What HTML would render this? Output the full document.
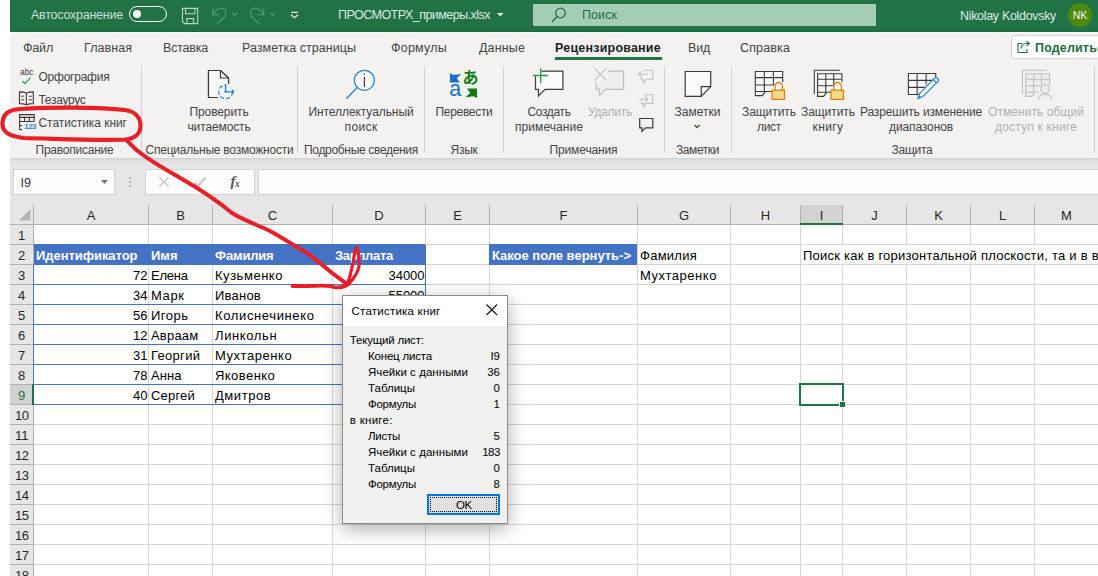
<!DOCTYPE html>
<html lang="ru"><head><meta charset="utf-8"><title>Excel</title>
<style>
html,body{margin:0;padding:0;}
body{width:1098px;height:576px;overflow:hidden;background:#fff;position:relative;font-family:"Liberation Sans", sans-serif;}
.t{position:absolute;white-space:pre;}
.b{position:absolute;box-sizing:border-box;}
svg{position:absolute;overflow:visible;}
</style></head><body>
<div class="b" style="left:10px;top:0px;width:1088px;height:32px;background:#217346;"></div>
<div class="b" style="left:10px;top:32px;width:1088px;height:126px;background:#f3f2f1;"></div>
<div class="b" style="left:10px;top:31px;width:1088px;height:1px;background:#1e6a3f;"></div>
<div class="b" style="left:10px;top:32px;width:1088px;height:1px;background:#fbfaf9;"></div>
<div class="b" style="left:10px;top:158px;width:1088px;height:66px;background:#e6e6e6;"></div>
<div class="b" style="left:10px;top:158px;width:1088px;height:4px;background:linear-gradient(#d2d2d2,#e6e6e6);"></div>
<div class="t" style="left:31.0px;top:7.5px;font-size:12.5px;line-height:15px;color:#c9dfd3;letter-spacing:-0.24px;">Автосохранение</div>
<div class="b" style="left:129px;top:6px;width:38px;height:16px;border:1.5px solid #fff;border-radius:9px;"></div>
<div class="b" style="left:133px;top:10px;width:8px;height:8px;border-radius:50%;background:#fff;"></div>
<svg style="left:0;top:0" width="1098" height="40" viewBox="0 0 1098 40" fill="none"><g stroke="#b9d6c6" stroke-width="1.100"><path d="M182.500 8.400h15.200v15.200h-13l-2.200-2.200z"/><path d="M185.500 8.400v5.400h9.400V8.400"/><path d="M186.800 23.600v-5h6.800v5"/></g>
<g stroke="#5a9d7c" stroke-width="1.100"><path d="M212.700 8.300v6.400h6.300"/><path d="M212.900 14.500c2.500-4 5.500-6.200 8.300-6.200 2.800 0 4.600 2.200 4.600 5 0 1.800-0.800 3.200-2 4.400l-6.600 5.900"/><path d="M232.200 12.700l2.500 2.700 2.500-2.700"/>
<path d="M263.700 8.300v6.400h-6.300"/><path d="M263.500 14.500c-2.500-4-5.500-6.200-8.300-6.200-2.800 0-4.600 2.200-4.600 5 0 1.800 0.800 3.200 2 4.400l6.600 5.900"/><path d="M270.100 12.700l2.500 2.700 2.500-2.700"/></g>
<g stroke="#e3efe8" stroke-width="1.200"><path d="M291 12.400h7"/><path d="M291 14.800l3.500 3 3.500-3"/></g></svg>
<div class="t" style="left:338.0px;top:7.5px;font-size:12.5px;line-height:15px;color:#d9e9e0;letter-spacing:-0.53px;">ПРОСМОТРХ_примеры.xlsx</div>
<svg style="left:496.500px;top:12.500px" width="7" height="4" viewBox="0 0 7 4"><path d="M0 0h6.500l-3.250 3.600z" fill="#e3efe8"/></svg>
<div class="b" style="left:533px;top:4px;width:343px;height:22px;background:#a3ceb5;"></div>
<svg style="left:551px;top:7px" width="16" height="16" viewBox="0 0 16 16" fill="none" stroke="#1e6e42" stroke-width="1.3"><circle cx="9.500" cy="6" r="4.800"/><path d="M6 9.500l-5 5.500"/></svg>
<div class="t" style="left:582.0px;top:7.5px;font-size:12.5px;line-height:15px;color:#1e6e42;letter-spacing:0.07px;">Поиск</div>
<div class="t" style="left:960.0px;top:8.5px;font-size:12.5px;line-height:15px;color:#dcebe2;letter-spacing:-0.32px;">Nikolay Koldovsky</div>
<div class="b" style="left:1068px;top:3px;width:24px;height:24px;border-radius:50%;background:#4f8a10;"></div>
<div class="t" style="left:1072.7px;top:9.0px;font-size:10.5px;line-height:13px;color:#f0f6e8;">NK</div>
<div class="t" style="left:23.0px;top:40.5px;font-size:12.5px;line-height:15px;color:#444444;letter-spacing:-0.18px;">Файл</div>
<div class="t" style="left:84.0px;top:40.5px;font-size:12.5px;line-height:15px;color:#444444;letter-spacing:0.06px;">Главная</div>
<div class="t" style="left:163.0px;top:40.5px;font-size:12.5px;line-height:15px;color:#444444;letter-spacing:-0.21px;">Вставка</div>
<div class="t" style="left:242.0px;top:40.5px;font-size:12.5px;line-height:15px;color:#444444;letter-spacing:0.03px;">Разметка страницы</div>
<div class="t" style="left:391.0px;top:40.5px;font-size:12.5px;line-height:15px;color:#444444;letter-spacing:0.23px;">Формулы</div>
<div class="t" style="left:479.0px;top:40.5px;font-size:12.5px;line-height:15px;color:#444444;letter-spacing:0.14px;">Данные</div>
<div class="t" style="left:688.0px;top:40.5px;font-size:12.5px;line-height:15px;color:#444444;letter-spacing:-0.21px;">Вид</div>
<div class="t" style="left:740.0px;top:40.5px;font-size:12.5px;line-height:15px;color:#444444;letter-spacing:0.14px;">Справка</div>
<div class="t" style="left:555.0px;top:40.5px;font-size:12.5px;line-height:15px;color:#222;font-weight:700;letter-spacing:0.21px;">Рецензирование</div>
<div class="b" style="left:555px;top:57px;width:107px;height:3px;background:#217346;"></div>
<div class="b" style="left:1011px;top:35px;width:100px;height:24px;background:#fff;border:1px solid #d8d6d4;border-radius:3px;"></div>
<svg style="left:1017px;top:40px" width="13" height="13" viewBox="0 0 13 13" fill="none" stroke="#217346" stroke-width="1.1"><path d="M5 3.500H1v9h9V9"/><path d="M4 8.500c0-3 2-5 5-5h3"/><path d="M9.500 1l2.800 2.500-2.800 2.500"/></svg>
<div class="t" style="left:1035.0px;top:40.5px;font-size:12.5px;line-height:15px;color:#1e6e42;font-weight:700;letter-spacing:0.15px;">Поделиться</div>
<div class="b" style="left:141px;top:66px;width:1px;height:87px;background:#d2d0ce;"></div>
<div class="b" style="left:297px;top:66px;width:1px;height:87px;background:#d2d0ce;"></div>
<div class="b" style="left:424px;top:66px;width:1px;height:87px;background:#d2d0ce;"></div>
<div class="b" style="left:503px;top:66px;width:1px;height:87px;background:#d2d0ce;"></div>
<div class="b" style="left:664px;top:66px;width:1px;height:87px;background:#d2d0ce;"></div>
<div class="b" style="left:731px;top:66px;width:1px;height:87px;background:#d2d0ce;"></div>
<div class="b" style="left:1094px;top:66px;width:1px;height:87px;background:#d2d0ce;"></div>
<div class="t" style="left:35.5px;top:143.0px;font-size:12px;line-height:14px;color:#444444;letter-spacing:-0.23px;">Правописание</div>
<div class="t" style="left:145.5px;top:143.0px;font-size:12px;line-height:14px;color:#444444;letter-spacing:-0.23px;">Специальные возможности</div>
<div class="t" style="left:304.0px;top:143.0px;font-size:12px;line-height:14px;color:#444444;letter-spacing:-0.32px;">Подробные сведения</div>
<div class="t" style="left:450.5px;top:143.0px;font-size:12px;line-height:14px;color:#444444;letter-spacing:-0.26px;">Язык</div>
<div class="t" style="left:549.5px;top:143.0px;font-size:12px;line-height:14px;color:#444444;letter-spacing:-0.13px;">Примечания</div>
<div class="t" style="left:676.0px;top:143.0px;font-size:12px;line-height:14px;color:#444444;letter-spacing:-0.42px;">Заметки</div>
<div class="t" style="left:891.5px;top:143.0px;font-size:12px;line-height:14px;color:#444444;letter-spacing:-0.26px;">Защита</div>
<div class="t" style="left:38.5px;top:70.0px;font-size:12px;line-height:14px;color:#444444;letter-spacing:-0.24px;">Орфография</div>
<div class="t" style="left:38.5px;top:93.0px;font-size:12px;line-height:14px;color:#444444;letter-spacing:-0.3px;">Тезаурус</div>
<div class="t" style="left:38.5px;top:116.0px;font-size:12px;line-height:14px;color:#444444;letter-spacing:-0.06px;">Статистика книг</div>
<div class="t" style="left:189.5px;top:104.5px;font-size:12px;line-height:14px;color:#444444;letter-spacing:-0.11px;">Проверить</div>
<div class="t" style="left:187.5px;top:120.0px;font-size:12px;line-height:14px;color:#444444;letter-spacing:-0.13px;">читаемость</div>
<div class="t" style="left:308.5px;top:104.5px;font-size:12px;line-height:14px;color:#444444;letter-spacing:-0.08px;">Интеллектуальный</div>
<div class="t" style="left:344.5px;top:120.0px;font-size:12px;line-height:14px;color:#444444;letter-spacing:0.38px;">поиск</div>
<div class="t" style="left:435.5px;top:104.5px;font-size:12px;line-height:14px;color:#444444;letter-spacing:-0.31px;">Перевести</div>
<div class="t" style="left:527.5px;top:104.5px;font-size:12px;line-height:14px;color:#444444;letter-spacing:-0.37px;">Создать</div>
<div class="t" style="left:515.0px;top:120.0px;font-size:12px;line-height:14px;color:#444444;letter-spacing:0.07px;">примечание</div>
<div class="t" style="left:588.0px;top:104.5px;font-size:12px;line-height:14px;color:#b3b0ad;letter-spacing:-0.26px;">Удалить</div>
<div class="t" style="left:674.5px;top:104.5px;font-size:12px;line-height:14px;color:#444444;letter-spacing:0.01px;">Заметки</div>
<div class="t" style="left:742.0px;top:104.5px;font-size:12px;line-height:14px;color:#444444;letter-spacing:-0.06px;">Защитить</div>
<div class="t" style="left:757.0px;top:120.0px;font-size:12px;line-height:14px;color:#444444;letter-spacing:-0.3px;">лист</div>
<div class="t" style="left:801.0px;top:104.5px;font-size:12px;line-height:14px;color:#444444;letter-spacing:-0.06px;">Защитить</div>
<div class="t" style="left:812.5px;top:120.0px;font-size:12px;line-height:14px;color:#444444;letter-spacing:0.41px;">книгу</div>
<div class="t" style="left:860.0px;top:104.5px;font-size:12px;line-height:14px;color:#444444;letter-spacing:-0.15px;">Разрешить изменение</div>
<div class="t" style="left:889.0px;top:120.0px;font-size:12px;line-height:14px;color:#444444;letter-spacing:-0.11px;">диапазонов</div>
<div class="t" style="left:988.0px;top:104.5px;font-size:12px;line-height:14px;color:#b3b0ad;letter-spacing:0.07px;">Отменить общий</div>
<div class="t" style="left:995.0px;top:120.0px;font-size:12px;line-height:14px;color:#b3b0ad;letter-spacing:0.21px;">доступ к книге</div>
<div class="t" style="left:20.0px;top:66.5px;font-size:8.5px;line-height:10px;color:#3b3a39;letter-spacing:-0.07px;">abc</div>
<svg style="left:0;top:0" width="1098" height="576" viewBox="0 0 1098 576" fill="none" ><path d="M22.300 81.300l2.700 2.300 5.500-6" stroke="#2e9e4f" stroke-width="1.300"/></svg>
<svg style="left:0;top:0" width="1098" height="576" viewBox="0 0 1098 576" fill="none" ><g stroke="#3b3a39" stroke-width="1.100"><path d="M26.400 93.200c-1.500-1-4-1.300-6.900-1.300v11.700c2.900 0 5.400 0.300 6.900 1.300 1.500-1 4-1.300 6.900-1.300V91.900c-2.900 0-5.400 0.300-6.900 1.300z"/><path d="M26.400 93.200v11.700"/>
<path d="M28.800 96.200h3M28.800 99.800h3M21.200 99.800h3"/><path d="M21.200 96.200h3" stroke="#e8202a"/></g></svg>
<svg style="left:0;top:0" width="1098" height="576" viewBox="0 0 1098 576" fill="none" ><rect x="19.600" y="114.900" width="14.600" height="2.400" fill="#c8c6c4"/><g stroke="#3b3a39" stroke-width="1.100"><path d="M19.600 129.600V114.500h14.600v7"/><path d="M19.600 117.500h14.600M19.600 121.500h14.600M24.500 117.500v4M29.300 117.500v4"/><path d="M19.600 125.500h2.500M19.600 129.600h2.500"/></g></svg>
<div class="t" style="left:24.3px;top:122.3px;font-size:8px;line-height:10px;color:#2b88d8;font-weight:700;letter-spacing:-0.62px;">123</div>
<svg style="left:0;top:0" width="1098" height="576" viewBox="0 0 1098 576" fill="none" ><path d="M208.500 70.500h12l8 7.500v6.500M208.500 70.500v27h9.500" stroke="#3b3a39" stroke-width="1.200" fill="#fafafa"/><path d="M208.500 70.500h12l8 7.500v19.500h-20z" fill="#fafafa"/><path d="M208.500 97.500v-27h12l8 7.500v6.500M220.500 70.500v7.500h8M208.500 97.500h9.500" stroke="#3b3a39" stroke-width="1.200"/>
<circle cx="225.600" cy="91.800" r="7" stroke="#2b88d8" stroke-width="1.200" stroke-dasharray="4.200 2.100" fill="#f3f2f1"/><rect x="226" y="84" width="9" height="7" fill="#f3f2f1"/><path d="M225.600 84.200v7.600h7.500" stroke="#2b88d8" stroke-width="1.300"/><path d="M231.800 89l3 2.800-3 2.800z" fill="#2b88d8"/><path d="M223.800 90.800h3.600l-1.800 2.400z" fill="#2b88d8"/></svg>
<svg style="left:0;top:0" width="1098" height="576" viewBox="0 0 1098 576" fill="none" ><circle cx="364.400" cy="80.300" r="10" stroke="#2b88d8" stroke-width="1.300" fill="#fafafa"/><path d="M357.300 87.600L346.300 98.700" stroke="#2b88d8" stroke-width="1.400"/><path d="M364.400 76.800v10" stroke="#3b3a39" stroke-width="1.200"/><circle cx="364.400" cy="74.300" r="0.800" fill="#3b3a39"/></svg>
<svg style="left:0;top:0" width="1098" height="576" viewBox="0 0 1098 576" fill="none" ><path d="M449.900 73.100l3.500 1.800 8-1-4.600 4.300 3 4.400h-9.900z" fill="#1a6fc9"/><path d="M477 98l-3.500-1.800-8 1 4.600-4.300-3-4.400h9.900z" fill="#107c10"/></svg>
<div class="t" style="left:449.3px;top:76.0px;font-size:21.5px;line-height:26px;color:#1a6fc9;">a</div>
<div class="t" style="left:462.5px;top:68.0px;font-size:16px;line-height:19px;color:#107c10;font-weight:700;font-family:'Liberation Sans','Noto Sans CJK JP',sans-serif;">あ</div>
<svg style="left:0;top:0" width="1098" height="576" viewBox="0 0 1098 576" fill="none" ><path d="M535.500 71.200h27.400v18.200h-18l-6.400 6.600v-6.600h-3z" stroke="#3b3a39" stroke-width="1.200" fill="#fafafa"/><rect x="532" y="67" width="9.400" height="9.200" fill="#f3f2f1"/><path d="M533 75.500h15M540.700 68.200v15" stroke="#2e9e4f" stroke-width="1.400"/></svg>
<svg style="left:0;top:0" width="1098" height="576" viewBox="0 0 1098 576" fill="none" ><path d="M596.300 71.200h27.300v18.200h-18l-6.300 6.600v-6.600h-3z" stroke="#c2c0be" stroke-width="1.200" fill="#ededed"/><rect x="593" y="67" width="15" height="15" fill="#f3f2f1"/><path d="M594.400 68.200l12.200 12.400M606.600 68.200l-12.200 12.400" stroke="#c2c0be" stroke-width="1.200"/></svg>
<svg style="left:0;top:0" width="1098" height="576" viewBox="0 0 1098 576" fill="none" ><path d="M644 70.300h8.800v9h-6.600l-3 3.600v-3.600h-1.800v-2.500" stroke="#c2c0be" stroke-width="1.100"/><path d="M638.700 74.200h9M641.500 71.400l-2.800 2.800 2.800 2.800" stroke="#c2c0be" stroke-width="1.100"/>
<path d="M644 94.800h8.800v8.600h-6.600l-3 3.600v-3.600h-1.800v-2" stroke="#c2c0be" stroke-width="1.100"/><path d="M638.700 99.200h9M645 96.400l2.800 2.800-2.800 2.800" stroke="#c2c0be" stroke-width="1.100"/>
<path d="M639.700 118.500h13.100v9.300h-7.300l-3.600 3.600v-3.600h-2.200z" stroke="#3b3a39" stroke-width="1.200"/></svg>
<svg style="left:0;top:0" width="1098" height="576" viewBox="0 0 1098 576" fill="none" ><path d="M685.200 71.500h25.500v15.100l-9.500 9.800h-16z" stroke="#3b3a39" stroke-width="1.200" fill="#fafafa"/><path d="M710.700 86.600h-9.500v9.800" stroke="#3b3a39" stroke-width="1.200"/><path d="M694.600 125l2.500 2.500 2.500-2.500" stroke="#3b3a39" stroke-width="1.100"/></svg>
<svg style="left:0;top:0" width="1098" height="576" viewBox="0 0 1098 576" fill="none" ><path d="M755.300 71.500h27.400v24.100h-27.400z" fill="#fafafa"/><g stroke="#3b3a39" stroke-width="1.100"><path d="M782.700 82V71.500h-27.400v24.100h7l3-4"/><path d="M755.300 77.600h27.400M755.300 85h19M755.300 91.500h17M764.300 71.500v20M773.400 71.500v13"/></g><path d="M775 90.2v-4a3.700 3.700 0 0 1 7.400 0v4" stroke="#e07b00" stroke-width="1.300"/><rect x="772" y="90.2" width="12.500" height="9.200" fill="#f8d98a" stroke="#e07b00" stroke-width="1.200"/></svg>
<svg style="left:0;top:0" width="1098" height="576" viewBox="0 0 1098 576" fill="none" ><path d="M817.600 73.800h24.300v22.600h-24.300z" fill="#fafafa"/><g stroke="#3b3a39" stroke-width="1.100"><path d="M839.800 70.200h-25.500v23.800"/><path d="M841.900 82V73.800h-24.300v22.600h6l3-4"/><path d="M817.600 79.200h24.300M817.600 85.800h16M817.600 92.300h14M825.800 73.800v18.500M833.700 73.800v11"/></g><path d="M834 90.2v-4a3.700 3.700 0 0 1 7.400 0v4" stroke="#e07b00" stroke-width="1.300"/><rect x="831" y="90.2" width="12.500" height="9.200" fill="#f8d98a" stroke="#e07b00" stroke-width="1.200"/></svg>
<svg style="left:0;top:0" width="1098" height="576" viewBox="0 0 1098 576" fill="none" ><path d="M908.400 73.500h27.300v6l-15 15h-12.300z" fill="#fafafa"/><g stroke="#3b3a39" stroke-width="1.100"><path d="M921 94.500h-12.600v-21h27.300v5"/><path d="M908.400 80.400h25M908.400 87.400h17M917.100 73.500v21M926.100 73.500v11"/></g>
<path d="M933.200 79.500l3.400 3.400-13.800 13.600-5 2.300 1.700-5.200z" fill="#fafafa" stroke="#2b88d8" stroke-width="1.200" stroke-linejoin="round"/><path d="M934.300 78.500a2.400 2.400 0 0 1 3.400 3.400l-1.100 1.100-3.400-3.400z" fill="#fafafa" stroke="#2b88d8" stroke-width="1.200"/><path d="M917.800 98.800l1.200-3.800 2.600 2.600z" fill="#2b88d8"/></svg>
<svg style="left:0;top:0" width="1098" height="576" viewBox="0 0 1098 576" fill="none" ><path d="M1025.700 73.800h23.900v22.600h-23.900z" fill="#ededed"/><g stroke="#c2c0be" stroke-width="1.100"><path d="M1047.500 70.200h-25v23.800"/><path d="M1049.600 85V73.800h-23.900v22.600h6l3-4"/><path d="M1025.700 79.200h23.900M1025.700 85.800h15M1025.700 92.300h12M1033.700 73.800v18.500M1041.600 73.800v11"/>
<circle cx="1045" cy="89" r="4.300" fill="#ededed"/><path d="M1038.400 99.700c0-3.500 3-5.600 6.600-5.600s6.800 2.100 6.800 5.600" fill="#ededed"/></g></svg>
<div class="b" style="left:13px;top:169px;width:102px;height:26px;background:#fdfdfd;border:1px solid #d4d4d4;"></div>
<div class="t" style="left:20.5px;top:175.7px;font-size:12.5px;line-height:15px;color:#333;">I9</div>
<svg style="left:101px;top:180px" width="8" height="5" viewBox="0 0 8 5"><path d="M0 0h7l-3.500 4z" fill="#777"/></svg>
<div class="b" style="left:129px;top:177px;width:2px;height:2px;background:#b8b8b8;"></div>
<div class="b" style="left:129px;top:181px;width:2px;height:2px;background:#b8b8b8;"></div>
<div class="b" style="left:129px;top:185px;width:2px;height:2px;background:#b8b8b8;"></div>
<div class="b" style="left:145px;top:169px;width:110px;height:26px;background:#fdfdfd;border:1px solid #d4d4d4;"></div>
<svg style="left:158px;top:176px" width="12" height="12" viewBox="0 0 12 12" fill="none" stroke="#c4c4c4" stroke-width="1.3"><path d="M1.500 1.500l9 9M10.500 1.500l-9 9"/></svg>
<svg style="left:193px;top:176px" width="14" height="12" viewBox="0 0 14 12" fill="none" stroke="#c6c6c6" stroke-width="2.200"><path d="M1.500 6.500l3.500 3.500 7.500-8.500"/></svg>
<div class="t" style="left:230.5px;top:172.0px;font-size:15px;line-height:18px;color:#555;font-weight:700;font-style:italic;font-family:'Liberation Serif',serif;">f</div>
<div class="t" style="left:235.0px;top:178.5px;font-size:9.5px;line-height:11px;color:#555;font-weight:700;font-style:italic;font-family:'Liberation Serif',serif;">x</div>
<div class="b" style="left:258px;top:169px;width:850px;height:26px;background:#fdfdfd;border:1px solid #d4d4d4;"></div>
<div class="b" style="left:10px;top:224px;width:1088px;height:352px;background:#fff;"></div>
<div class="b" style="left:801px;top:205px;width:41px;height:19px;background:#d2d2d2;"></div>
<div class="b" style="left:10px;top:225px;width:23px;height:351px;background:#e6e6e6;"></div>
<div class="b" style="left:10px;top:385px;width:23px;height:19px;background:#d2d2d2;"></div>
<div class="b" style="left:10px;top:224px;width:1088px;height:1px;background:#b1b1b1;"></div>
<div class="b" style="left:148px;top:205px;width:1px;height:19px;background:#b1b1b1;"></div>
<div class="t" style="left:86.7px;top:207.5px;font-size:13px;line-height:16px;color:#262626;">A</div>
<div class="b" style="left:212px;top:205px;width:1px;height:19px;background:#b1b1b1;"></div>
<div class="t" style="left:176.2px;top:207.5px;font-size:13px;line-height:16px;color:#262626;">B</div>
<div class="b" style="left:332px;top:205px;width:1px;height:19px;background:#b1b1b1;"></div>
<div class="t" style="left:267.8px;top:207.5px;font-size:13px;line-height:16px;color:#262626;">C</div>
<div class="b" style="left:425px;top:205px;width:1px;height:19px;background:#b1b1b1;"></div>
<div class="t" style="left:374.3px;top:207.5px;font-size:13px;line-height:16px;color:#262626;">D</div>
<div class="b" style="left:489px;top:205px;width:1px;height:19px;background:#b1b1b1;"></div>
<div class="t" style="left:453.2px;top:207.5px;font-size:13px;line-height:16px;color:#262626;">E</div>
<div class="b" style="left:637px;top:205px;width:1px;height:19px;background:#b1b1b1;"></div>
<div class="t" style="left:559.5px;top:207.5px;font-size:13px;line-height:16px;color:#262626;">F</div>
<div class="b" style="left:730px;top:205px;width:1px;height:19px;background:#b1b1b1;"></div>
<div class="t" style="left:678.9px;top:207.5px;font-size:13px;line-height:16px;color:#262626;">G</div>
<div class="b" style="left:800px;top:205px;width:1px;height:19px;background:#b1b1b1;"></div>
<div class="t" style="left:760.8px;top:207.5px;font-size:13px;line-height:16px;color:#262626;">H</div>
<div class="b" style="left:842px;top:205px;width:1px;height:19px;background:#b1b1b1;"></div>
<div class="t" style="left:819.7px;top:207.5px;font-size:13px;line-height:16px;color:#262626;">I</div>
<div class="b" style="left:906px;top:205px;width:1px;height:19px;background:#b1b1b1;"></div>
<div class="t" style="left:871.2px;top:207.5px;font-size:13px;line-height:16px;color:#262626;">J</div>
<div class="b" style="left:970px;top:205px;width:1px;height:19px;background:#b1b1b1;"></div>
<div class="t" style="left:934.2px;top:207.5px;font-size:13px;line-height:16px;color:#262626;">K</div>
<div class="b" style="left:1034px;top:205px;width:1px;height:19px;background:#b1b1b1;"></div>
<div class="t" style="left:998.9px;top:207.5px;font-size:13px;line-height:16px;color:#262626;">L</div>
<div class="b" style="left:1098px;top:205px;width:1px;height:19px;background:#b1b1b1;"></div>
<div class="t" style="left:1061.1px;top:207.5px;font-size:13px;line-height:16px;color:#262626;">M</div>
<div class="b" style="left:33px;top:205px;width:1px;height:371px;background:#b1b1b1;"></div>
<svg style="left:19px;top:209px" width="12" height="12" viewBox="0 0 12 12"><path d="M11.500 0v11.500H0z" fill="#b4b4b4"/></svg>
<div class="b" style="left:800px;top:223px;width:43px;height:2px;background:#217346;"></div>
<div class="b" style="left:148px;top:225px;width:1px;height:351px;background:#d6d6d6;"></div>
<div class="b" style="left:212px;top:225px;width:1px;height:351px;background:#d6d6d6;"></div>
<div class="b" style="left:332px;top:225px;width:1px;height:351px;background:#d6d6d6;"></div>
<div class="b" style="left:425px;top:225px;width:1px;height:351px;background:#d6d6d6;"></div>
<div class="b" style="left:489px;top:225px;width:1px;height:351px;background:#d6d6d6;"></div>
<div class="b" style="left:637px;top:225px;width:1px;height:351px;background:#d6d6d6;"></div>
<div class="b" style="left:730px;top:225px;width:1px;height:351px;background:#d6d6d6;"></div>
<div class="b" style="left:800px;top:225px;width:1px;height:351px;background:#d6d6d6;"></div>
<div class="b" style="left:842px;top:225px;width:1px;height:351px;background:#d6d6d6;"></div>
<div class="b" style="left:906px;top:225px;width:1px;height:351px;background:#d6d6d6;"></div>
<div class="b" style="left:970px;top:225px;width:1px;height:351px;background:#d6d6d6;"></div>
<div class="b" style="left:1034px;top:225px;width:1px;height:351px;background:#d6d6d6;"></div>
<div class="b" style="left:1098px;top:225px;width:1px;height:351px;background:#d6d6d6;"></div>
<div class="b" style="left:34px;top:244px;width:1064px;height:1px;background:#d6d6d6;"></div>
<div class="b" style="left:10px;top:244px;width:23px;height:1px;background:#b1b1b1;"></div>
<div class="t" style="left:17.9px;top:227.5px;font-size:13px;line-height:16px;color:#262626;">1</div>
<div class="b" style="left:34px;top:264px;width:1064px;height:1px;background:#d6d6d6;"></div>
<div class="b" style="left:10px;top:264px;width:23px;height:1px;background:#b1b1b1;"></div>
<div class="t" style="left:17.9px;top:247.5px;font-size:13px;line-height:16px;color:#262626;">2</div>
<div class="b" style="left:34px;top:284px;width:1064px;height:1px;background:#d6d6d6;"></div>
<div class="b" style="left:10px;top:284px;width:23px;height:1px;background:#b1b1b1;"></div>
<div class="t" style="left:17.9px;top:267.5px;font-size:13px;line-height:16px;color:#262626;">3</div>
<div class="b" style="left:34px;top:304px;width:1064px;height:1px;background:#d6d6d6;"></div>
<div class="b" style="left:10px;top:304px;width:23px;height:1px;background:#b1b1b1;"></div>
<div class="t" style="left:17.9px;top:287.5px;font-size:13px;line-height:16px;color:#262626;">4</div>
<div class="b" style="left:34px;top:324px;width:1064px;height:1px;background:#d6d6d6;"></div>
<div class="b" style="left:10px;top:324px;width:23px;height:1px;background:#b1b1b1;"></div>
<div class="t" style="left:17.9px;top:307.5px;font-size:13px;line-height:16px;color:#262626;">5</div>
<div class="b" style="left:34px;top:344px;width:1064px;height:1px;background:#d6d6d6;"></div>
<div class="b" style="left:10px;top:344px;width:23px;height:1px;background:#b1b1b1;"></div>
<div class="t" style="left:17.9px;top:327.5px;font-size:13px;line-height:16px;color:#262626;">6</div>
<div class="b" style="left:34px;top:364px;width:1064px;height:1px;background:#d6d6d6;"></div>
<div class="b" style="left:10px;top:364px;width:23px;height:1px;background:#b1b1b1;"></div>
<div class="t" style="left:17.9px;top:347.5px;font-size:13px;line-height:16px;color:#262626;">7</div>
<div class="b" style="left:34px;top:384px;width:1064px;height:1px;background:#d6d6d6;"></div>
<div class="b" style="left:10px;top:384px;width:23px;height:1px;background:#b1b1b1;"></div>
<div class="t" style="left:17.9px;top:367.5px;font-size:13px;line-height:16px;color:#262626;">8</div>
<div class="b" style="left:34px;top:404px;width:1064px;height:1px;background:#d6d6d6;"></div>
<div class="b" style="left:10px;top:404px;width:23px;height:1px;background:#b1b1b1;"></div>
<div class="t" style="left:17.9px;top:387.5px;font-size:13px;line-height:16px;color:#217346;">9</div>
<div class="b" style="left:34px;top:424px;width:1064px;height:1px;background:#d6d6d6;"></div>
<div class="b" style="left:10px;top:424px;width:23px;height:1px;background:#b1b1b1;"></div>
<div class="t" style="left:14.9px;top:407.5px;font-size:13px;line-height:16px;color:#262626;letter-spacing:-0.33px;">10</div>
<div class="b" style="left:34px;top:444px;width:1064px;height:1px;background:#d6d6d6;"></div>
<div class="b" style="left:10px;top:444px;width:23px;height:1px;background:#b1b1b1;"></div>
<div class="t" style="left:14.9px;top:427.5px;font-size:13px;line-height:16px;color:#262626;letter-spacing:0.15px;">11</div>
<div class="b" style="left:34px;top:464px;width:1064px;height:1px;background:#d6d6d6;"></div>
<div class="b" style="left:10px;top:464px;width:23px;height:1px;background:#b1b1b1;"></div>
<div class="t" style="left:14.9px;top:447.5px;font-size:13px;line-height:16px;color:#262626;letter-spacing:-0.33px;">12</div>
<div class="b" style="left:34px;top:484px;width:1064px;height:1px;background:#d6d6d6;"></div>
<div class="b" style="left:10px;top:484px;width:23px;height:1px;background:#b1b1b1;"></div>
<div class="t" style="left:14.9px;top:467.5px;font-size:13px;line-height:16px;color:#262626;letter-spacing:-0.33px;">13</div>
<div class="b" style="left:34px;top:504px;width:1064px;height:1px;background:#d6d6d6;"></div>
<div class="b" style="left:10px;top:504px;width:23px;height:1px;background:#b1b1b1;"></div>
<div class="t" style="left:14.9px;top:487.5px;font-size:13px;line-height:16px;color:#262626;letter-spacing:-0.33px;">14</div>
<div class="b" style="left:34px;top:524px;width:1064px;height:1px;background:#d6d6d6;"></div>
<div class="b" style="left:10px;top:524px;width:23px;height:1px;background:#b1b1b1;"></div>
<div class="t" style="left:14.9px;top:507.5px;font-size:13px;line-height:16px;color:#262626;letter-spacing:-0.33px;">15</div>
<div class="b" style="left:34px;top:544px;width:1064px;height:1px;background:#d6d6d6;"></div>
<div class="b" style="left:10px;top:544px;width:23px;height:1px;background:#b1b1b1;"></div>
<div class="t" style="left:14.9px;top:527.5px;font-size:13px;line-height:16px;color:#262626;letter-spacing:-0.33px;">16</div>
<div class="b" style="left:34px;top:564px;width:1064px;height:1px;background:#d6d6d6;"></div>
<div class="b" style="left:10px;top:564px;width:23px;height:1px;background:#b1b1b1;"></div>
<div class="t" style="left:14.9px;top:547.5px;font-size:13px;line-height:16px;color:#262626;letter-spacing:-0.33px;">17</div>
<div class="b" style="left:34px;top:584px;width:1064px;height:1px;background:#d6d6d6;"></div>
<div class="b" style="left:10px;top:584px;width:23px;height:1px;background:#b1b1b1;"></div>
<div class="t" style="left:14.9px;top:567.5px;font-size:13px;line-height:16px;color:#262626;letter-spacing:-0.33px;">18</div>
<div class="b" style="left:32px;top:384px;width:2px;height:21px;background:#217346;"></div>
<div class="b" style="left:34px;top:244px;width:391px;height:21px;background:#4472c4;"></div>
<div class="b" style="left:489px;top:244px;width:148px;height:21px;background:#4472c4;"></div>
<div class="b" style="left:34px;top:284px;width:392px;height:1px;background:#4472c4;"></div>
<div class="b" style="left:34px;top:304px;width:392px;height:1px;background:#4472c4;"></div>
<div class="b" style="left:34px;top:324px;width:392px;height:1px;background:#4472c4;"></div>
<div class="b" style="left:34px;top:344px;width:392px;height:1px;background:#4472c4;"></div>
<div class="b" style="left:34px;top:364px;width:392px;height:1px;background:#4472c4;"></div>
<div class="b" style="left:34px;top:384px;width:392px;height:1px;background:#4472c4;"></div>
<div class="b" style="left:34px;top:404px;width:392px;height:1px;background:#4472c4;"></div>
<div class="b" style="left:425px;top:245px;width:1px;height:160px;background:#4472c4;"></div>
<div class="b" style="left:33px;top:265px;width:1px;height:120px;background:#4472c4;"></div>
<div class="t" style="left:36.0px;top:247.5px;font-size:13px;line-height:16px;color:#fff;font-weight:700;letter-spacing:-0.06px;">Идентификатор</div>
<div class="t" style="left:151.0px;top:247.5px;font-size:13px;line-height:16px;color:#fff;font-weight:700;letter-spacing:-0.02px;">Имя</div>
<div class="t" style="left:215.0px;top:247.5px;font-size:13px;line-height:16px;color:#fff;font-weight:700;letter-spacing:-0.18px;">Фамилия</div>
<div class="t" style="left:335.0px;top:247.5px;font-size:13px;line-height:16px;color:#fff;font-weight:700;letter-spacing:-0.28px;">Зарплата</div>
<div class="t" style="left:492.0px;top:247.5px;font-size:13px;line-height:16px;color:#fff;font-weight:700;letter-spacing:-0.02px;">Какое поле вернуть-&gt;</div>
<div class="t" style="left:640.0px;top:247.5px;font-size:13px;line-height:16px;color:#000;letter-spacing:0.26px;">Фамилия</div>
<div class="t" style="left:640.0px;top:267.5px;font-size:13px;line-height:16px;color:#000;letter-spacing:0.54px;">Мухтаренко</div>
<div class="b" style="left:842px;top:245px;width:256px;height:19px;background:#fff;"></div>
<div class="t" style="left:803.0px;top:247.5px;font-size:13px;line-height:16px;color:#000;letter-spacing:0.23px;">Поиск как в горизонтальной плоскости, та и в в</div>
<div class="t" style="left:133.0px;top:267.5px;font-size:13px;line-height:16px;color:#000;letter-spacing:0.02px;">72</div>
<div class="t" style="left:151.0px;top:267.5px;font-size:13px;line-height:16px;color:#000;letter-spacing:-0.22px;">Елена</div>
<div class="t" style="left:215.0px;top:267.5px;font-size:13px;line-height:16px;color:#000;letter-spacing:0.53px;">Кузьменко</div>
<div class="t" style="left:388.5px;top:267.5px;font-size:13px;line-height:16px;color:#000;letter-spacing:-0.03px;">34000</div>
<div class="t" style="left:133.0px;top:287.5px;font-size:13px;line-height:16px;color:#000;letter-spacing:0.02px;">34</div>
<div class="t" style="left:151.0px;top:287.5px;font-size:13px;line-height:16px;color:#000;letter-spacing:0.62px;">Марк</div>
<div class="t" style="left:215.0px;top:287.5px;font-size:13px;line-height:16px;color:#000;letter-spacing:0.22px;">Иванов</div>
<div class="t" style="left:388.5px;top:287.5px;font-size:13px;line-height:16px;color:#000;letter-spacing:-0.03px;">55000</div>
<div class="t" style="left:133.0px;top:307.5px;font-size:13px;line-height:16px;color:#000;letter-spacing:0.02px;">56</div>
<div class="t" style="left:151.0px;top:307.5px;font-size:13px;line-height:16px;color:#000;letter-spacing:0.47px;">Игорь</div>
<div class="t" style="left:215.0px;top:307.5px;font-size:13px;line-height:16px;color:#000;letter-spacing:0.63px;">Колиснечинеко</div>
<div class="t" style="left:133.0px;top:327.5px;font-size:13px;line-height:16px;color:#000;letter-spacing:0.02px;">12</div>
<div class="t" style="left:151.0px;top:327.5px;font-size:13px;line-height:16px;color:#000;letter-spacing:0.2px;">Авраам</div>
<div class="t" style="left:215.0px;top:327.5px;font-size:13px;line-height:16px;color:#000;letter-spacing:0.61px;">Линкольн</div>
<div class="t" style="left:133.0px;top:347.5px;font-size:13px;line-height:16px;color:#000;letter-spacing:0.02px;">31</div>
<div class="t" style="left:151.0px;top:347.5px;font-size:13px;line-height:16px;color:#000;letter-spacing:0.31px;">Георгий</div>
<div class="t" style="left:215.0px;top:347.5px;font-size:13px;line-height:16px;color:#000;letter-spacing:0.57px;">Мухтаренко</div>
<div class="t" style="left:133.0px;top:367.5px;font-size:13px;line-height:16px;color:#000;letter-spacing:0.02px;">78</div>
<div class="t" style="left:151.0px;top:367.5px;font-size:13px;line-height:16px;color:#000;letter-spacing:0.06px;">Анна</div>
<div class="t" style="left:215.0px;top:367.5px;font-size:13px;line-height:16px;color:#000;letter-spacing:0.45px;">Яковенко</div>
<div class="t" style="left:133.0px;top:387.5px;font-size:13px;line-height:16px;color:#000;letter-spacing:0.02px;">40</div>
<div class="t" style="left:151.0px;top:387.5px;font-size:13px;line-height:16px;color:#000;letter-spacing:0.2px;">Сергей</div>
<div class="t" style="left:215.0px;top:387.5px;font-size:13px;line-height:16px;color:#000;letter-spacing:0.55px;">Дмитров</div>
<div class="b" style="left:799px;top:383px;width:45px;height:23px;border:2px solid #217346;"></div>
<div class="b" style="left:839px;top:401px;width:6px;height:6px;background:#217346;border:1px solid #fff;border-right:0;border-bottom:0"></div>
<div class="b" style="left:342px;top:295px;width:166px;height:229px;background:#f0f0f0;border:1px solid #8a8a8a;box-shadow:0 5px 18px rgba(0,0,0,.32);"></div>
<div class="b" style="left:343px;top:296px;width:164px;height:30px;background:#fff;"></div>
<div class="t" style="left:351.5px;top:304.0px;font-size:11.5px;line-height:14px;color:#000;letter-spacing:0.23px;">Статистика книг</div>
<svg style="left:486px;top:304px" width="12" height="12" viewBox="0 0 12 12" fill="none" stroke="#111" stroke-width="1.100"><path d="M0.500 0.500l10.500 10.500M11 0.500L0.500 11"/></svg>
<div class="t" style="left:349.8px;top:333.0px;font-size:11.5px;line-height:14px;color:#000;letter-spacing:-0.2px;">Текущий лист:</div>
<div class="t" style="left:368.0px;top:349.0px;font-size:11.5px;line-height:14px;color:#000;letter-spacing:-0.19px;">Конец листа</div>
<div class="t" style="left:490.4px;top:349.0px;font-size:11.5px;line-height:14px;color:#000;">I9</div>
<div class="t" style="left:368.0px;top:365.0px;font-size:11.5px;line-height:14px;color:#000;letter-spacing:0.05px;">Ячейки с данными</div>
<div class="t" style="left:487.2px;top:365.0px;font-size:11.5px;line-height:14px;color:#000;">36</div>
<div class="t" style="left:368.0px;top:381.0px;font-size:11.5px;line-height:14px;color:#000;">Таблицы</div>
<div class="t" style="left:493.6px;top:381.0px;font-size:11.5px;line-height:14px;color:#000;">0</div>
<div class="t" style="left:368.0px;top:397.0px;font-size:11.5px;line-height:14px;color:#000;letter-spacing:-0.29px;">Формулы</div>
<div class="t" style="left:493.6px;top:397.0px;font-size:11.5px;line-height:14px;color:#000;">1</div>
<div class="t" style="left:349.8px;top:413.0px;font-size:11.5px;line-height:14px;color:#000;letter-spacing:0.29px;">в книге:</div>
<div class="t" style="left:368.0px;top:429.0px;font-size:11.5px;line-height:14px;color:#000;letter-spacing:-0.25px;">Листы</div>
<div class="t" style="left:493.6px;top:429.0px;font-size:11.5px;line-height:14px;color:#000;">5</div>
<div class="t" style="left:368.0px;top:445.0px;font-size:11.5px;line-height:14px;color:#000;letter-spacing:0.05px;">Ячейки с данными</div>
<div class="t" style="left:482.2px;top:445.0px;font-size:11.5px;line-height:14px;color:#000;letter-spacing:-0.46px;">183</div>
<div class="t" style="left:368.0px;top:461.0px;font-size:11.5px;line-height:14px;color:#000;">Таблицы</div>
<div class="t" style="left:493.6px;top:461.0px;font-size:11.5px;line-height:14px;color:#000;">0</div>
<div class="t" style="left:368.0px;top:477.0px;font-size:11.5px;line-height:14px;color:#000;letter-spacing:-0.29px;">Формулы</div>
<div class="t" style="left:493.6px;top:477.0px;font-size:11.5px;line-height:14px;color:#000;">8</div>
<div class="b" style="left:427px;top:494px;width:73px;height:21px;background:#e1e1e1;border:2px solid #0078d7;"></div>
<div class="b" style="left:430px;top:497px;width:67px;height:15px;border:1px dotted #000;"></div>
<div class="t" style="left:456.1px;top:497.5px;font-size:11.5px;line-height:14px;color:#000;letter-spacing:-0.56px;">OK</div>
<svg style="left:0;top:0" width="1098" height="576" viewBox="0 0 1098 576" fill="none" stroke="#e81f27" stroke-width="4" stroke-linecap="round" stroke-linejoin="round">
<path d="M126 139.500 C100 140.800 60 138.800 24 138 C20 137.800 19 136.800 16 136.500 C7 135 2 130 2.500 123 C3 114 8 110 20 109 C50 107 100 107 125 110 C136 111.500 140.500 118 140.500 126 C140.500 134 134 138.500 126 139.500" stroke-width="4.200"/>
<path d="M126 139.500 C130 143.500 134 148 138.500 151.500 C150 161 170 172 182 179 C196 187 215 199 232 213 C245 221 258 225 270 231 C281 237 291 243.500 302 250 C311 255 319 262 326 268 C333 274 340 279 347 284"/>
<path d="M347.500 284.500 C343 288 339 288 334 287 C328 285.600 322 285.500 316 285.800 C308 286 300 286 292.500 286" stroke-width="3.800"/>
<path d="M347.500 284 C350 277 352 268 353.500 260 C354.500 254 355.500 249 356.500 247.500 C358 251 359.500 259 359 266 C358.500 271 355 277 348.500 284.500" stroke-width="3.200"/>
</svg>
</body></html>
